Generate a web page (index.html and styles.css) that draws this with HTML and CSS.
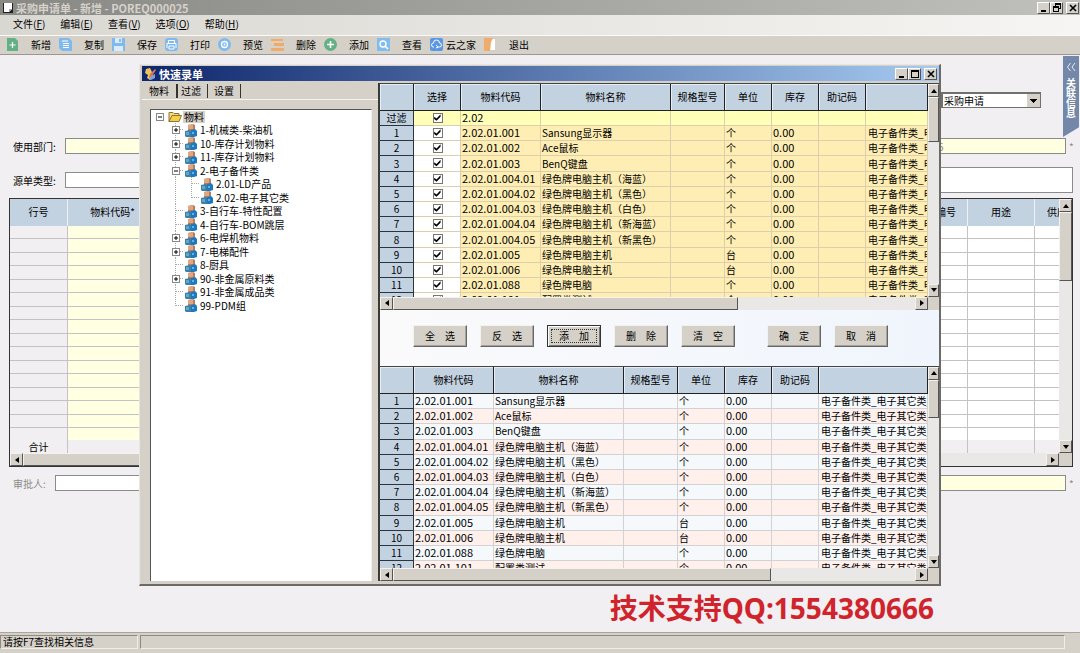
FILE: index.html
```html
<!DOCTYPE html>
<html lang="zh-CN">
<head>
<meta charset="utf-8">
<title>采购申请单 - 新增</title>
<link rel="stylesheet" href="styles.css">
</head>
<body>
<svg class="defs" aria-hidden="true">
  <symbol id="up" viewBox="0 0 8 8"><path d="M4 2 7 6H1z"/></symbol>
  <symbol id="down" viewBox="0 0 8 8"><path d="M1 2h6L4 6z"/></symbol>
  <symbol id="left" viewBox="0 0 8 8"><path d="M6 1v6L2 4z"/></symbol>
  <symbol id="right" viewBox="0 0 8 8"><path d="M2 1v6l4-3z"/></symbol>
  <symbol id="min" viewBox="0 0 10 10"><path d="M2 7h5v2H2z"/></symbol>
  <symbol id="max" viewBox="0 0 10 10"><path fill-rule="evenodd" d="M1 1h8v8H1zM2 3v5h6V3z"/></symbol>
  <symbol id="restore" viewBox="0 0 10 10"><path fill-rule="evenodd" d="M3 0h6v6H7v3H1V3h2zM4 2v1h3v2h1V2zM2 5v3h4V5z"/></symbol>
  <symbol id="close" viewBox="0 0 10 10"><path d="M2 2l6 6M8 2l-6 6" stroke="#000" stroke-width="1.600"/></symbol>
  <symbol id="folder" viewBox="0 0 14 12"><path d="M1 11V2h4l1 1h5v2" fill="#f6dc7a" stroke="#8a7430"/><path d="M1 11 4 5h9.500L11 11z" fill="#f4cf4f" stroke="#8a7430"/></symbol>
  <symbol id="item" viewBox="0 0 14 13"><path d="M4 1l5-1 2 1v6H4z" fill="#bb7c5c"/><path d="M4 1l5-1v5H4z" fill="#dfa682"/><path d="M1 7l5-1 2 2v5H2L1 12z" fill="#3c7fa8"/><path d="M7 6l4-1 2 2v5l-3 1H7z" fill="#1e78be"/><path d="M2 8h3v3H2z" fill="#5fa8c8"/><path d="M8 8h2v2H8z" fill="#62b4e6"/></symbol>
</svg>

<header class="titlebar">
  <svg class="doc-icon" viewBox="0 0 12 12"><path d="M1 1h10v10H1z" fill="#222"/><path d="M2 1h8v6l-3 3H2z" fill="#fff"/><path d="M10 7H7v3z" fill="#aaa"/></svg>
  <h1 class="title">采购申请单 - 新增 - POREQ000025</h1>
  <div class="winbtns">
    <button class="winbtn" aria-label="最小化"><svg><use href="#min"/></svg></button>
    <button class="winbtn" aria-label="还原"><svg><use href="#restore"/></svg></button>
    <button class="winbtn last" aria-label="关闭"><svg><use href="#close"/></svg></button>
  </div>
</header>

<nav class="menubar">
  <button class="menu">文件(<u>F</u>)</button>
  <button class="menu">编辑(<u>E</u>)</button>
  <button class="menu">查看(<u>V</u>)</button>
  <button class="menu">选项(<u>O</u>)</button>
  <button class="menu">帮助(<u>H</u>)</button>
</nav>

<div class="toolbar">
  <button class="tool"><svg viewBox="0 0 13 13"><path d="M1 0h8l3 3v10H1z" fill="#62b083"/><path d="M6.500 4v6M3.500 7h6" stroke="#fff" stroke-width="1.200"/></svg>新增</button>
  <button class="tool"><svg viewBox="0 0 13 13"><path d="M0 0h10l3 3v10H3L0 10z" fill="#7fb9ee"/><path d="M3 3h6M4 5.500h6M4 7.500h6M4 9.500h6" stroke="#fff"/></svg>复制</button>
  <button class="tool"><svg viewBox="0 0 13 13"><path d="M0 0h13v13H0z" fill="#7fb9ee"/><path d="M3 0h7v5H3zM2 8h9v5H2z" fill="#d9ecfc"/><path d="M7 1h2v3H7z" fill="#7fb9ee"/></svg>保存</button>
  <button class="tool"><svg viewBox="0 0 13 13"><rect width="13" height="13" rx="3" fill="#7fb9ee"/><path d="M3.500 5V2.500h6V5M2 10V5.500h9V10M4 8h5v3H4z" fill="none" stroke="#fff"/></svg>打印</button>
  <button class="tool"><svg viewBox="0 0 13 13"><circle cx="6.500" cy="6.500" r="6.500" fill="#7fb9ee"/><circle cx="6.500" cy="6.500" r="3" fill="none" stroke="#fff" stroke-width="1.300"/><circle cx="6.500" cy="6.500" r="1" fill="#fff"/></svg>预览</button>
  <button class="tool"><svg viewBox="0 0 13 13"><path d="M0 1h12v2H0zM3 5h10v3H3zM0 10h13v3H0z" fill="#efab6b"/><path d="M0 4h9" stroke="#f4c79b"/></svg>删除</button>
  <button class="tool"><svg viewBox="0 0 13 13"><circle cx="6.500" cy="6.500" r="6.500" fill="#62b083"/><path d="M6.500 3v7M3 6.500h7" stroke="#fff" stroke-width="1.600"/></svg>添加</button>
  <button class="tool"><svg viewBox="0 0 13 13"><path d="M0 0h13v13H0z" fill="#7fbdf0"/><circle cx="6" cy="6" r="3" fill="none" stroke="#fff" stroke-width="1.400"/><path d="M8 8l3 3" stroke="#fff" stroke-width="1.600"/></svg>查看</button>
  <button class="tool tight"><svg viewBox="0 0 13 13"><rect width="13" height="13" rx="2" fill="#5a97e4"/><path d="M4 9H3.500a2 2 0 0 1 0-4 3 3 0 0 1 6 0 2 2 0 0 1 0 4H7M6 7l2 2-2 1" fill="none" stroke="#fff"/></svg>云之家</button>
  <button class="tool"><svg viewBox="0 0 13 13"><path d="M6 1h5v11H6z" fill="#fff"/><path d="M0 0h9L7 4 6 13H0z" fill="#efab6b"/></svg>退出</button>
</div>

<main class="workspace">
  <div class="row row-type">
    <select class="type" aria-label="单据类型"><option>采购申请</option></select>
  </div>
  <div class="row row-dept">
    <label for="dept">使用部门:</label><input id="dept" class="field required">
    <input class="field required date" aria-label="日期" value="5"><span class="star">*</span>
  </div>
  <div class="row row-source">
    <label for="source">源单类型:</label><input id="source" class="field">
    <input class="field tall" aria-label="备注">
  </div>
  <div class="grid sheet">
    <div class="view">
      <table class="lines">
        <colgroup><col class="w58"><col class="w90"><col><col class="w110"><col class="w67"><col class="w24"></colgroup>
        <thead><tr><th>行号</th><th>物料代码*</th><th></th><th class="end">编号</th><th>用途</th><th class="start">供应商</th></tr></thead>
        <tbody id="lines"></tbody>
        <tfoot><tr><td class="sum">合计</td><td></td><td></td><td></td><td></td><td></td></tr></tfoot>
      </table>
    </div>
    <div class="vbar"><button aria-label="上"><svg><use href="#up"/></svg></button><i class="thumb t31"></i><b></b><button aria-label="下"><svg><use href="#down"/></svg></button></div>
    <div class="hbar"><button aria-label="左"><svg><use href="#left"/></svg></button><i class="thumb t50"></i><b></b><button aria-label="右"><svg><use href="#right"/></svg></button></div>
    <div class="corner"></div>
  </div>
  <div class="row row-approve">
    <label for="approver" class="muted">审批人:</label><input id="approver" class="field">
    <input class="field required date" aria-label="审批日期"><span class="star">*</span>
  </div>

  <button class="sidetab"><svg viewBox="0 0 10 8"><path d="M4.500 0 1.500 4l3 4M9 0 6 4l3 4" fill="none" stroke="#e6ecf5"/></svg><span>关联信息</span></button>
  <p class="support">技术支持QQ:1554380666</p>

  <section class="dialog" role="dialog" aria-labelledby="dlg-title">
    <header class="dlg-title">
      <svg class="dlg-icon" viewBox="0 0 12 12"><path d="M2 1l4-1 2 4 1 5-3 3-3-2 1-3-3-2z" fill="#efc25a"/><path d="M11 1l1 1-4 6-3 2 1-4z" fill="#d8705c"/><path d="M7 8l4-2v4l-4 2H5z" fill="#7f9fd4"/></svg>
      <h2 id="dlg-title">快速录单</h2>
      <div class="winbtns">
        <button class="winbtn" aria-label="最小化"><svg><use href="#min"/></svg></button>
        <button class="winbtn" aria-label="最大化"><svg><use href="#max"/></svg></button>
        <button class="winbtn last" aria-label="关闭"><svg><use href="#close"/></svg></button>
      </div>
    </header>
    <div class="dlg-body">
      <aside class="side">
        <div class="tabs" role="tablist">
          <button class="tab active" role="tab" aria-selected="true">物料</button>
          <button class="tab" role="tab">过滤</button>
          <button class="tab" role="tab">设置</button>
        </div>
        <ul class="tree" id="tree"></ul>
      </aside>
      <div class="main">
        <div class="grid">
          <div class="view">
            <table class="items pick">
              <colgroup><col class="w34"><col class="w47"><col class="w80"><col class="w130"><col class="w54"><col class="w47"><col class="w47"><col class="w47"><col></colgroup>
              <thead><tr><th></th><th>选择</th><th>物料代码</th><th>物料名称</th><th>规格型号</th><th>单位</th><th>库存</th><th>助记码</th><th></th></tr></thead>
              <tbody id="pick"></tbody>
            </table>
          </div>
          <div class="vbar"><button aria-label="上"><svg><use href="#up"/></svg></button><i class="thumb t25"></i><b></b><button aria-label="下"><svg><use href="#down"/></svg></button></div>
          <div class="hbar"><button aria-label="左"><svg><use href="#left"/></svg></button><i class="thumb t66"></i><b></b><button aria-label="右"><svg><use href="#right"/></svg></button></div>
          <div class="corner"></div>
        </div>
        <div class="actions">
          <button class="btn">全&emsp;选</button>
          <button class="btn">反&emsp;选</button>
          <button class="btn default">添&emsp;加</button>
          <button class="btn">删&emsp;除</button>
          <button class="btn">清&emsp;空</button>
          <button class="btn apart">确&emsp;定</button>
          <button class="btn">取&emsp;消</button>
        </div>
        <div class="grid">
          <div class="view">
            <table class="items chosen">
              <colgroup><col class="w34"><col class="w80"><col class="w130"><col class="w54"><col class="w47"><col class="w47"><col class="w47"><col></colgroup>
              <thead><tr><th></th><th>物料代码</th><th>物料名称</th><th>规格型号</th><th>单位</th><th>库存</th><th>助记码</th><th></th></tr></thead>
              <tbody id="chosen"></tbody>
            </table>
          </div>
          <div class="vbar"><button aria-label="上"><svg><use href="#up"/></svg></button><i class="thumb t22"></i><b></b><button aria-label="下"><svg><use href="#down"/></svg></button></div>
          <div class="hbar"><button aria-label="左"><svg><use href="#left"/></svg></button><i class="thumb t72"></i><b></b><button aria-label="右"><svg><use href="#right"/></svg></button></div>
          <div class="corner"></div>
        </div>
      </div>
    </div>
  </section>
</main>

<footer class="status"><span class="hint">请按F7查找相关信息</span><span class="info"></span></footer>
<script src="app.js"></script>
</body>
</html>
```
FILE: styles.css
```css
* { box-sizing: border-box; }
body {
  margin: 0; min-height: 100vh; display: flex; flex-direction: column; overflow: hidden;
  font: 10px/13px "Noto Sans CJK SC", sans-serif; color: #000; background: #d5d1c9;
}
button, input, select { font: inherit; color: inherit; margin: 0; padding: 0; border: 0; border-radius: 0; background: none; }
h1, h2, p, ul { margin: 0; padding: 0; }
svg { display: block; flex: none; }
.defs { position: absolute; width: 0; height: 0; }

.titlebar { display: flex; align-items: center; gap: 2px; height: 15px; padding: 0 1px 0 2px; background: linear-gradient(90deg, #888885, #c0c0bd); }
.doc-icon { width: 12px; height: 12px; }
.title { flex: 1; font-size: 11px; line-height: 14px; color: #d6d2ca; }
.winbtns { display: flex; }
.winbtn {
  display: grid; place-items: center; width: 13px; height: 12px; background: #d5d1c9;
  border: 1px solid; border-color: #fff #555 #555 #fff;
}
.winbtn svg { width: 10px; height: 10px; }
.winbtn.last { margin-left: 3px; }

.menubar { display: flex; align-items: center; gap: 15px; height: 20px; padding: 0 0 3px 13px; background: linear-gradient(90deg, #d9d7d1, #f6f5f3); }
.toolbar { display: flex; align-items: center; gap: 8px; height: 20px; padding: 0 0 1px 6px; background: #d5d1c9; border-top: 1px solid #fbfaf8; border-bottom: 1px solid #9b9892; }
.tool { display: flex; align-items: center; gap: 12px; white-space: nowrap; }
.tool svg { width: 13px; height: 13px; }
.tool.tight { gap: 3px; }

.workspace { position: relative; flex: 1; display: flex; flex-direction: column; padding: 37px 7px 0 9px; background: #f1eff1; }
.row { display: flex; align-items: center; padding-left: 4px; }
.row label { width: 52px; white-space: nowrap; }
.row label.muted { width: 42px; color: #8b8b8b; }
.field { height: 16px; border: 1px solid #8b8b8b; background: #fff; flex: 1; min-width: 0; }
.field.required { background: #ffffe1; }
.field.date, .field.tall { flex: none; width: 167px; margin-left: 100px; }
.field.date { padding-left: 38px; color: #8b8b8b; }
.field.tall { width: 174px; height: 26px; }
.star { width: 7px; padding-left: 3px; color: #8b8b8b; }
.row-type { justify-content: flex-end; padding-right: 32px; }
.type {
  width: 100px; height: 16px; padding-left: 1px; appearance: none; border: 2px solid #707070; border-right-width: 1px; border-bottom-width: 1px;
  background: linear-gradient(#000, #000) no-repeat right 3px top 5px / 7px 1px, linear-gradient(#000, #000) no-repeat right 4px top 6px / 5px 1px,
    linear-gradient(#000, #000) no-repeat right 5px top 7px / 3px 1px, linear-gradient(#000, #000) no-repeat right 6px top 8px / 1px 1px,
    linear-gradient(#d5d1c9, #d5d1c9) no-repeat right / 13px 100%, #fff;
  line-height: 12px;
}
.row-dept { margin-top: 30px; }
.row-source { margin: 13px 0 5px; padding-right: 0; }
.row-approve { margin-top: 8px; }

.grid { display: grid; grid-template: minmax(0, 1fr) 13px / minmax(0, 1fr) 11px; min-height: 0; }
.sheet { grid-template-columns: minmax(0, 1fr) 13px; border: 1px solid #333; }
.view { overflow: hidden; }
table { width: 100%; table-layout: fixed; border-collapse: separate; border-spacing: 0; white-space: nowrap; }
th, td { overflow: hidden; padding: 0; font-weight: normal; }
.w24 { width: 24px; } .w34 { width: 34px; } .w47 { width: 47px; } .w54 { width: 54px; } .w58 { width: 58px; } .w67 { width: 67px; }
.w80 { width: 80px; } .w90 { width: 90px; } .w110 { width: 110px; } .w130 { width: 130px; }

.lines th { height: 27px; padding-bottom: 2px; background: #c3d2e1; border-right: 1px solid #eef2f6; }
.lines th.end { text-align: right; padding-right: 11px; }
.lines th.start { text-align: left; padding-left: 12px; border-right: 0; }
.lines td { height: 13px; border-right: 1px solid #c4c2c4; border-bottom: 1px solid #c4c2c4; background: #fff; line-height: 12px; text-align: center; }
.lines td:last-child { border-right: 0; }
.lines tbody tr:nth-child(even) td { height: 14px; }
.lines tbody tr:last-child td { height: 12px; border-bottom: 0; }
.lines td:first-child, .lines tfoot td { background: #f1eff1; }
.lines tbody td:nth-child(2) { background: #ffffe1; }
.lines tfoot td { border-bottom: 0; }

.vbar, .hbar { display: flex; background: #e9e8e6; overflow: hidden; }
.vbar { flex-direction: column; }
.vbar button, .hbar button, .thumb { flex: none; background: #d5d1c9; border: 1px solid; border-color: #f4f2ee #555 #555 #f4f2ee; }
.vbar button, .hbar button { display: grid; place-items: center; width: 13px; height: 13px; }
.grid .vbar button { width: 100%; }
.vbar svg, .hbar svg { width: 8px; height: 8px; }
.vbar b, .hbar b { flex: 1; }
.corner { background: #d5d1c9; }
.t31 { height: 27%; } .t25 { height: 21%; } .t22 { height: 19%; }
.t50 { width: 50%; } .t66 { width: 63%; } .t72 { width: 69%; }

.sidetab {
  position: absolute; top: 1px; right: 1px; width: 16px; height: 81px; padding: 7px 2px 0; display: flex; flex-direction: column; align-items: center; gap: 7px;
  background: #7388a8; color: #fff; clip-path: polygon(0 0, 100% 0, 100% 88%, 0 100%);
}
.sidetab svg { width: 10px; height: 8px; }
.sidetab span { width: 11px; font-weight: bold; line-height: 10px; overflow-wrap: anywhere; }
.support { position: absolute; right: 146px; bottom: 6px; font: bold 28px/36px "Noto Sans", "Noto Sans CJK SC", sans-serif; color: #d0232b; }

.dialog {
  position: absolute; top: 9px; right: 139px; bottom: 46px; left: 139px; display: flex; flex-direction: column;
  padding: 1px 0 3px 2px; background: #d5d1c9; border: 1px solid #e8e6e0; border-right: 2px solid #6c6a66; border-bottom: 2px solid #6c6a66;
}
.dlg-title { display: flex; align-items: center; gap: 3px; height: 15px; padding: 0 2px; background: linear-gradient(90deg, #0d266c, #a6caf0); color: #fff; }
.dlg-title h2 { flex: 1; font-size: 11px; line-height: 14px; }
.dlg-icon { width: 12px; height: 12px; }
.dlg-body { flex: 1; display: flex; min-height: 0; padding-top: 2px; }
.side { width: 238px; display: flex; flex-direction: column; border-right: 2px solid #3a3a38; }
.tabs { display: flex; height: 17px; border-bottom: 1px solid #f6f4f0; padding-top: 1px; }
.tab { height: 14px; padding: 0 6px 1px; border-right: 1px solid #333; }
.tab.active { padding: 0 7px 1px; border-right-width: 2px; }
.tab.active + .tab { padding-left: 3px; }
.tree { flex: 1; margin: 9px 6px 0 8px; padding-left: 1px; background: #fff; border: 1px solid #555; border-right-color: #eee; border-bottom: 0; list-style: none; }
.tree li { display: flex; align-items: center; height: 13px; }
.tree li:nth-child(even) { height: 14px; }
.cell { width: 16px; height: 100%; flex: none; display: grid; place-items: center; }
.cell.line { background: repeating-linear-gradient(#aaa 0 1px, #fff 1px 2px) no-repeat 7px 0 / 1px 100%; }
.cell.tee { background: repeating-linear-gradient(#aaa 0 1px, #fff 1px 2px) no-repeat 7px 0 / 1px 100%, repeating-linear-gradient(90deg, #aaa 0 1px, #fff 1px 2px) no-repeat 8px 6px / 8px 1px; }
.cell.ell { background: repeating-linear-gradient(#aaa 0 1px, #fff 1px 2px) no-repeat 7px 0 / 1px 7px, repeating-linear-gradient(90deg, #aaa 0 1px, #fff 1px 2px) no-repeat 8px 6px / 8px 1px; }
.box { width: 8px; height: 8px; background: #fff; border: 1px solid #888; }
.box svg { width: 6px; height: 6px; }
.tree .icon { width: 14px; height: 13px; }
.tree .name { padding: 0 2px; line-height: 12px; white-space: nowrap; }
.tree .sel { background: #d5d1c9; margin-left: 1px; padding: 0 1px; }

.main { flex: 1; min-width: 0; display: grid; grid-template-rows: 20fr auto 19fr; background: #f4f6fb; }
.main .grid { border-top: 1px solid #444; }
.items th { height: 27px; padding-bottom: 1px; background: #c3d2e1; border-right: 1px solid #222; border-bottom: 1px solid #222; box-shadow: inset 1px 1px #e6edf5; }
.items td { height: 15px; padding: 0 0 1px 1px; line-height: 13px; border-right: 1px solid #dccfae; border-bottom: 1px solid #dccfae; background: #feeeb4; }
.items td:first-child { background: #c3d2e1; border-color: #2c3440; text-align: center; padding-left: 0; }
.items .code { font-size: 11px; }
.pick .check { background: #fff; text-align: center; }
.pick .check input { display: block; margin: 0 auto; }
.pick tr.filter td:not(:first-child) { background: #ffffb8; }
.pick tbody tr:nth-child(5n+4) td, .chosen tbody tr:nth-child(5n+3) td { height: 16px; }
.items td:last-child { padding-left: 2px; }
.chosen td { background: #f5f9fc; border-color: #d2d2d4; }
.chosen tr:nth-child(even) td:not(:first-child) { background: #fff0ec; }
input[type="checkbox"] { appearance: none; width: 10px; height: 10px; border: 1px solid #777; background: #fff; }
input[type="checkbox"]::before { content: ""; display: block; width: 8px; height: 8px; background: #000; clip-path: polygon(8% 40%, 38% 62%, 88% 10%, 88% 42%, 38% 92%, 8% 68%); }

.actions { display: flex; align-items: center; height: 56px; gap: 13px; padding: 0 0 4px 33px; background: linear-gradient(90deg, #fafafb, #f0f5fd); }
.btn { width: 54px; height: 22px; padding-bottom: 1px; background: #d5d1c9; border: 1px solid; border-color: #f4f2ee #666 #666 #f4f2ee; box-shadow: inset -1px -1px #a5a29b; }
.btn.default { border-color: #333; outline: 1px dotted #333; outline-offset: -5px; box-shadow: inset 1px 1px #fff, inset -1px -1px #777; }
.btn.apart { margin-left: 19px; }

.status { display: flex; gap: 2px; height: 21px; padding: 2px 15px 4px 0; background: #d5d1c9; border-top: 1px solid #a9a6a0; }
.status span { border: 1px solid; border-color: #8d8a85 #f0eeea #f0eeea #8d8a85; line-height: 11px; padding-left: 2px; }
.hint { width: 138px; }
.info { flex: 1; }
```
FILE: app.js
```js
const items = [
  ["2.02.01.001", "Sansung显示器", "个"],
  ["2.02.01.002", "Ace鼠标", "个"],
  ["2.02.01.003", "BenQ键盘", "个"],
  ["2.02.01.004.01", "绿色牌电脑主机（海蓝）", "个"],
  ["2.02.01.004.02", "绿色牌电脑主机（黑色）", "个"],
  ["2.02.01.004.03", "绿色牌电脑主机（白色）", "个"],
  ["2.02.01.004.04", "绿色牌电脑主机（新海蓝）", "个"],
  ["2.02.01.004.05", "绿色牌电脑主机（新黑色）", "个"],
  ["2.02.01.005", "绿色牌电脑主机", "台"],
  ["2.02.01.006", "绿色牌电脑主机", "台"],
  ["2.02.01.088", "绿色牌电脑", "个"],
  ["2.02.01.101", "配置类测试", "个"],
];
const category = "电子备件类_电子其它类_";
const check = (name) => `<td class="check"><input type="checkbox" checked aria-label="${name}"></td>`;
const rest = ([code, name, unit]) =>
  `<td class="code">${code}</td><td>${name}</td><td></td><td>${unit}</td><td class="code">0.00</td><td></td><td>${category}</td>`;

document.getElementById("pick").innerHTML =
  `<tr class="filter"><td>过滤</td>${check("过滤")}<td class="code">2.02</td>${"<td></td>".repeat(6)}</tr>` +
  items.map((it, i) => `<tr><td>${i + 1}</td>${check(it[1])}${rest(it)}</tr>`).join("");
document.getElementById("chosen").innerHTML =
  items.map((it, i) => `<tr><td>${i + 1}</td>${rest(it)}</tr>`).join("");
document.getElementById("lines").innerHTML = `<tr>${"<td></td>".repeat(6)}</tr>`.repeat(16);

// Each node: depth, expander ("+", "-" or none), label, last among its siblings.
const nodes = [
  [0, "-", "物料"],
  [1, "+", "1-机械类-柴油机"],
  [1, "+", "10-库存计划物料"],
  [1, "+", "11-库存计划物料"],
  [1, "-", "2-电子备件类"],
  [2, "", "2.01-LD产品"],
  [2, "", "2.02-电子其它类", true],
  [1, "", "3-自行车-特性配置"],
  [1, "", "4-自行车-BOM跳层"],
  [1, "+", "6-电焊机物料"],
  [1, "+", "7-电梯配件"],
  [1, "", "8-厨具"],
  [1, "+", "90-非金属原料类"],
  [1, "", "91-非金属成品类"],
  [1, "", "99-PDM组", true],
];
const box = (sign) => sign
  ? `<button class="box" aria-label="${sign === "+" ? "展开" : "折叠"}"><svg viewBox="0 0 6 6"><path d="M1 3h4${sign === "+" ? "M3 1v4" : ""}" stroke="#000"/></svg></button>`
  : "";
document.getElementById("tree").innerHTML = nodes.map(([depth, sign, name, last]) => {
  const lead = depth === 0 ? "" : `<span class="cell"></span>` + (depth === 2 ? `<span class="cell line"></span>` : "");
  const joint = depth === 0 ? "" : last ? "ell" : "tee";
  const icon = depth === 0 ? "folder" : "item";
  return `<li>${lead}<span class="cell ${joint}">${box(sign)}</span>` +
    `<svg class="icon"><use href="#${icon}"/></svg><span class="name ${depth ? "" : "sel"}">${name}</span></li>`;
}).join("");
```
